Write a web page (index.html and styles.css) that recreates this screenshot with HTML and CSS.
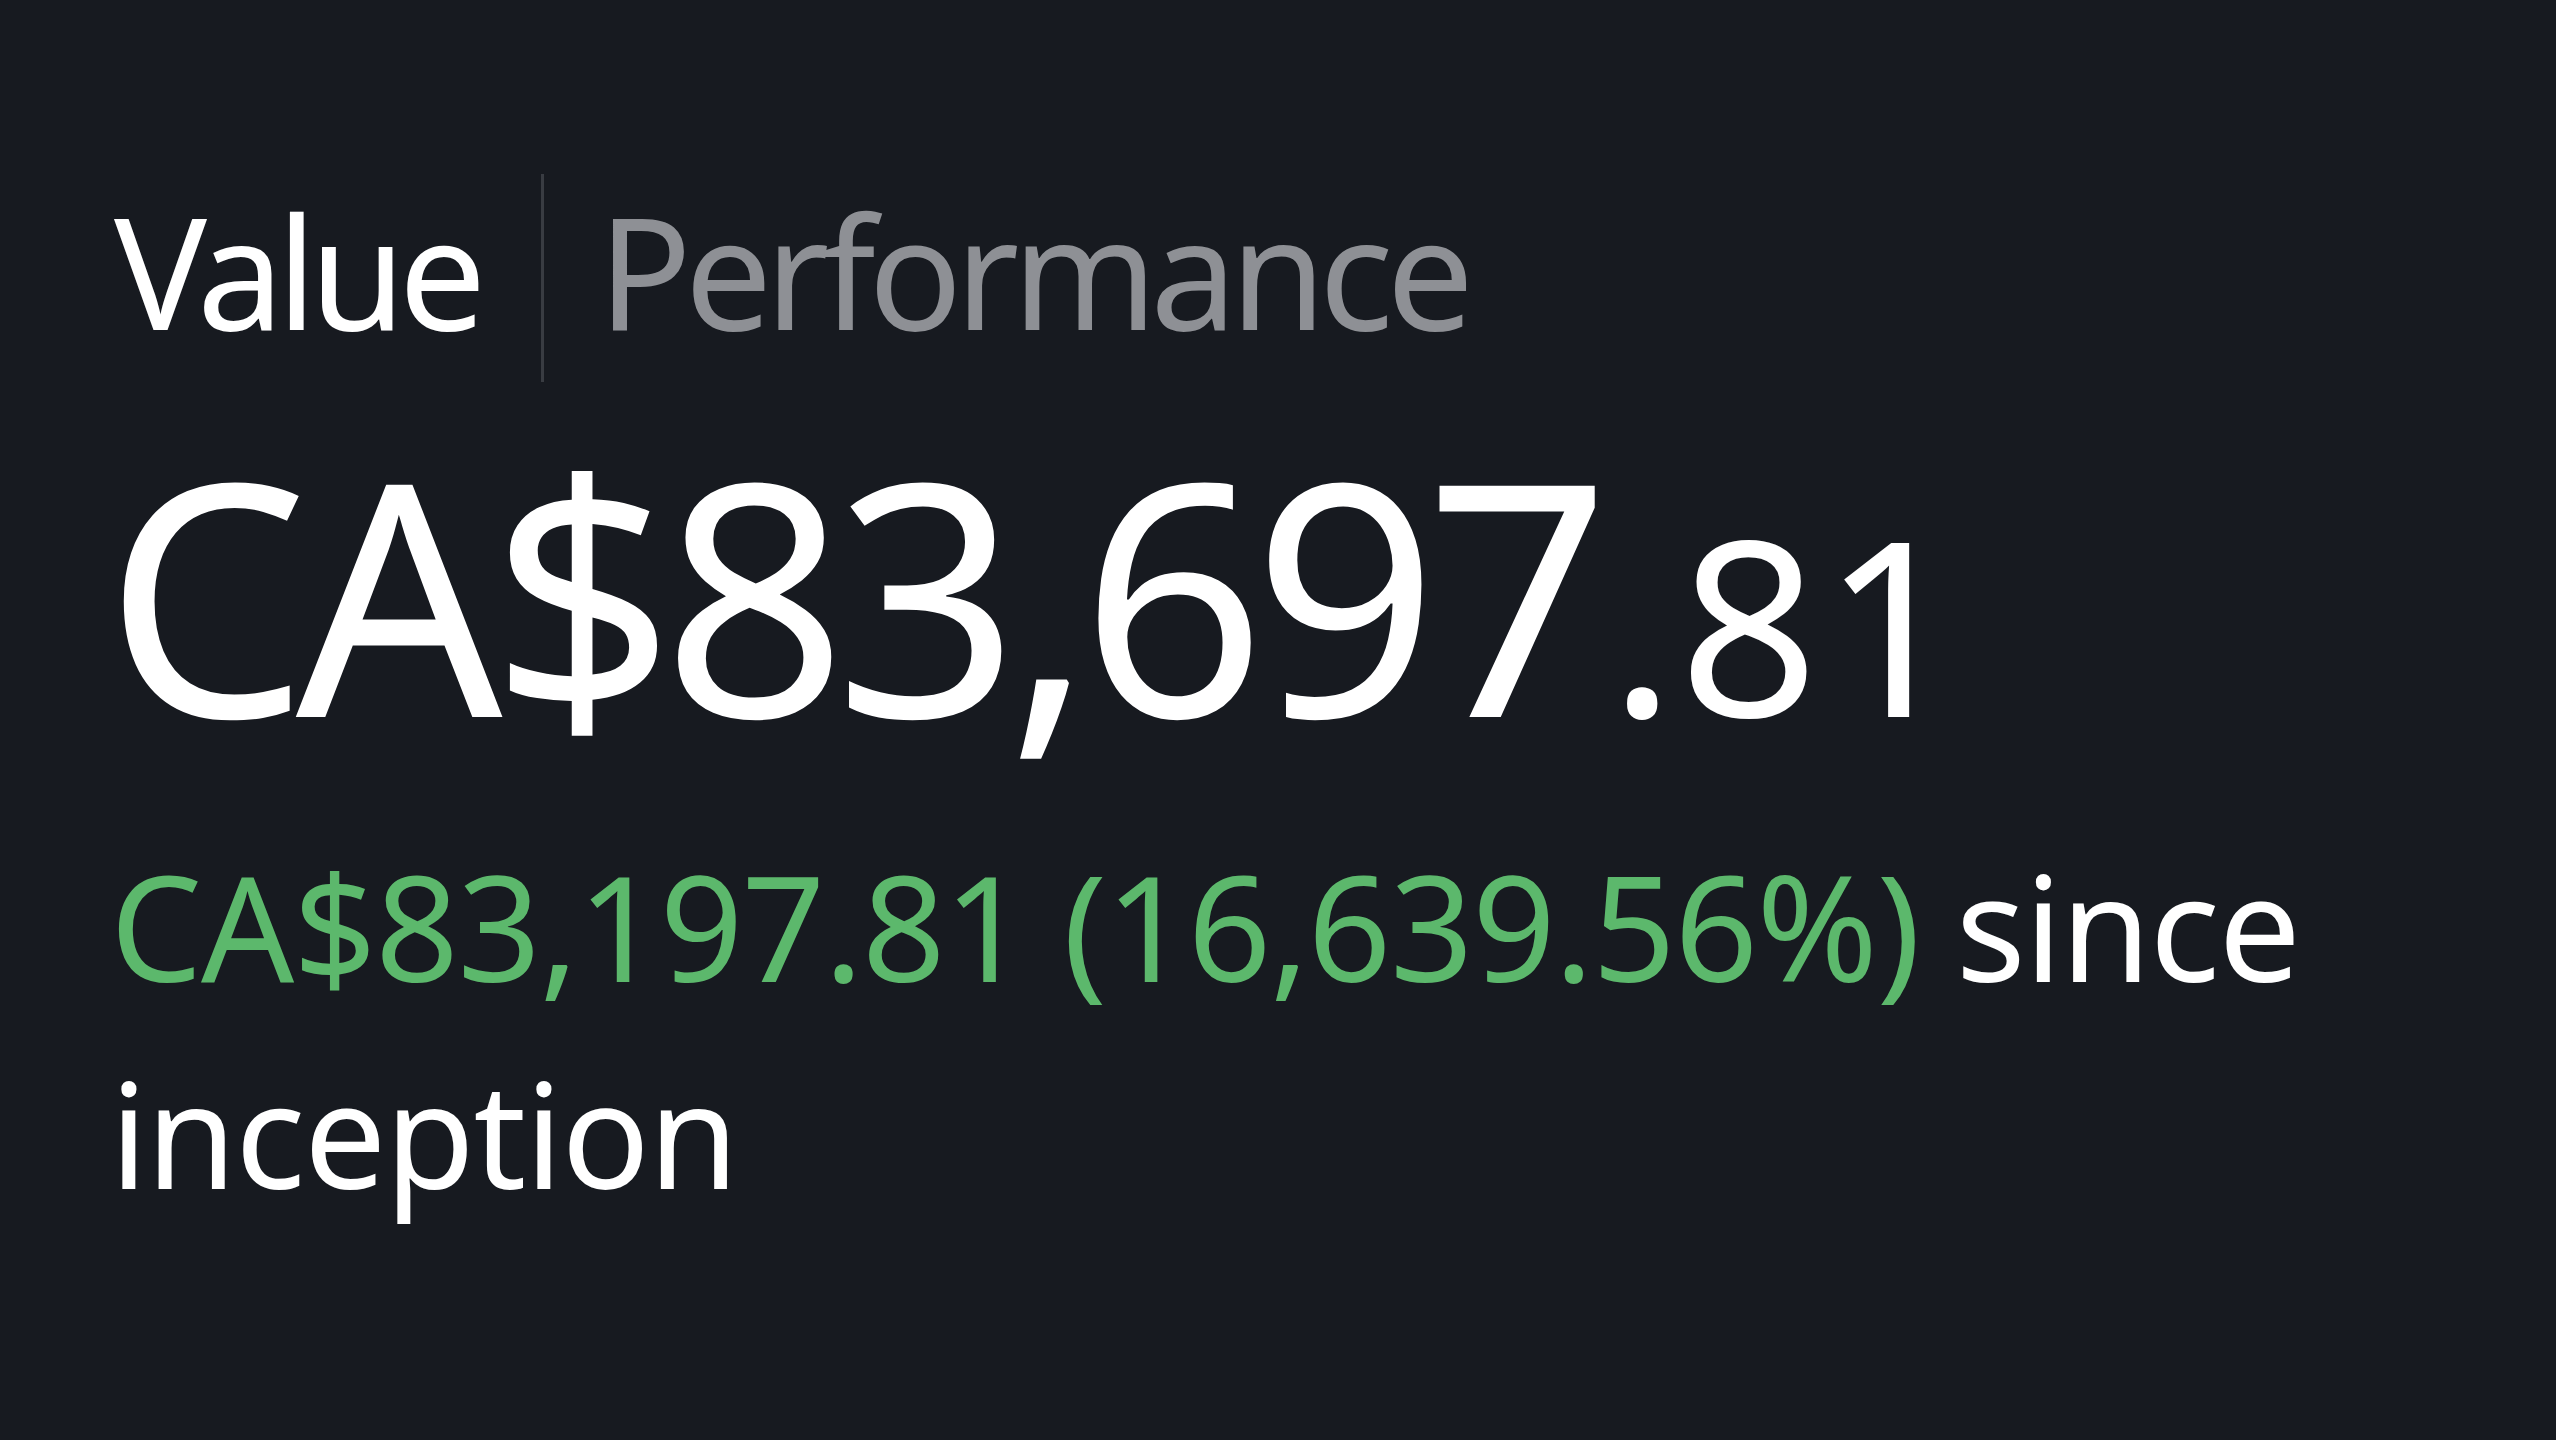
FILE: index.html
```html
<!DOCTYPE html>
<html lang="en">
<head>
<meta charset="utf-8">
<title>Value</title>
<link rel="stylesheet" href="styles.css">
</head>
<body>
<main class="panel">
  <nav class="tabs">
    <span class="tab tab-active">Value</span>
    <span class="tab-divider"></span>
    <span class="tab tab-muted">Performance</span>
  </nav>
  <div class="balance">
    <span class="balance-main">CA$83,697</span><span class="balance-cents">.81</span>
  </div>
  <p class="change"><span class="change-gain">CA$83,197.81 (16,639.56%)</span> <span class="change-word">since</span> <span class="change-word">inception</span></p>
</main>
</body>
</html>
```
FILE: styles.css
```css
html, body {
  margin: 0;
  padding: 0;
  background: #171a20;
  height: 100%;
}
body {
  font-family: "Noto Sans", "Open Sans", sans-serif;
  color: #ffffff;
  overflow: hidden;
}
.panel {
  padding: 174px 111px 0 114px;
  display: flex;
  flex-direction: column;
}
.tabs {
  display: flex;
  align-items: center;
  height: 208px;
}
.tab {
  font-size: 155px;
  line-height: 1;
  letter-spacing: -7px;
  position: relative;
  top: -9px;
}
.tab-active { color: #ffffff; }
.tab-muted { color: #8e9095; }
.tab-divider {
  width: 3px;
  align-self: stretch;
  background: #393c42;
  margin: 0 54px 0 62px;
}
.balance {
  display: flex;
  align-items: baseline;
  margin-top: 48px;
  margin-left: -10px;
  line-height: 1;
}
.balance-main {
  font-size: 324px;
  letter-spacing: -13px;
}
.balance-cents {
  font-size: 244px;
  letter-spacing: 4px;
  margin-left: 12px;
}
.change {
  margin: 68px 0 0 -4px;
  font-size: 146px;
  line-height: 207px;
  letter-spacing: -1.3px;
  max-width: 2330px;
}
.change-gain { color: #5cb86c; }
.change-word { color: #ffffff; }
```
